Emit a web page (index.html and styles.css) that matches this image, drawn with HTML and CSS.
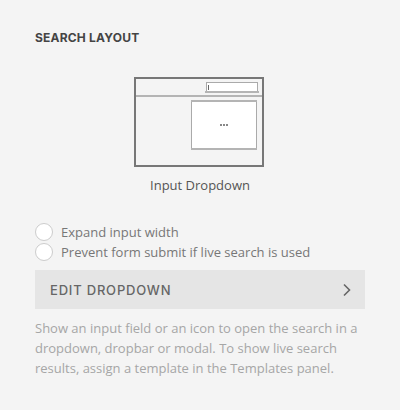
FILE: index.html
```html
<!DOCTYPE html>
<html>
  <head>
    <link rel="stylesheet" href="styles.css">
  </head>
  <body>
    <div class="panel">
      <h3 class="panel-title">Search Layout</h3>

      <div class="layout-choice">
        <svg class="layout-thumb" width="132" height="92" viewBox="0 0 132 92">
          <!-- page frame -->
          <rect x="1" y="1" width="128" height="88" fill="none" stroke="#777" stroke-width="2"/>
          <!-- header divider -->
          <rect x="2" y="18" width="126" height="2" fill="#b4b4b4"/>
          <!-- search input -->
          <rect x="72.5" y="5.5" width="51" height="10" fill="#fff" stroke="#aaa" stroke-width="1"/>
          <rect x="71" y="14" width="54" height="2" fill="#b4b4b4"/>
          <rect x="74" y="8" width="1" height="5" fill="#666"/>
          <!-- dropdown -->
          <rect x="57.5" y="23.5" width="65" height="48" fill="#fff" stroke="#aaa" stroke-width="1"/>
          <rect x="57" y="71" width="66" height="2" fill="#b4b4b4"/>
          <rect x="57" y="23" width="66" height="2" fill="#b4b4b4"/>
          <rect x="86" y="47" width="2" height="2" fill="#888"/>
          <rect x="89" y="47" width="2" height="2" fill="#888"/>
          <rect x="92" y="47" width="2" height="2" fill="#888"/>
        </svg>
        <div class="layout-name">Input Dropdown</div>
      </div>

      <div class="options">
        <label class="option"><span class="radio"></span>Expand input width</label>
        <label class="option"><span class="radio"></span>Prevent form submit if live search is used</label>
      </div>

      <button class="edit-button">
        <span>Edit Dropdown</span>
        <svg width="10" height="14" viewBox="0 0 10 14"><polyline points="2,1.5 7.5,7 2,12.5" fill="none" stroke="#666" stroke-width="1.6"/></svg>
      </button>

      <p class="help">Show an input field or an icon to open the search in a dropdown, dropbar or modal. To show live search results, assign a template in the Templates panel.</p>
    </div>
  </body>
</html>
```

FILE: styles.css
```css
html, body {
    margin: 0;
    background: #f4f4f4;
}

.panel {
    padding: 30px 35px 0 35px;
    font-family: "Open Sans", sans-serif;
    font-size: 13px;
}

.panel-title {
    margin: 0;
    font-family: "Inter", sans-serif;
    font-size: 12px;
    line-height: 16px;
    font-weight: 700;
    letter-spacing: 0.2px;
    text-transform: uppercase;
    color: #444;
}

.layout-choice {
    display: flex;
    flex-direction: column;
    align-items: center;
    margin-top: 31px;
}

.layout-thumb {
    display: block;
}

.layout-name {
    margin-top: 6px;
    line-height: 20px;
    color: #555;
}

.options {
    display: flex;
    flex-direction: column;
    margin-top: 27px;
}

.option {
    display: flex;
    align-items: center;
    gap: 8px;
    height: 20px;
    color: #777;
}

.radio {
    width: 18px;
    height: 18px;
    box-sizing: border-box;
    border: 1px solid #ccc;
    border-radius: 50%;
    background: #fff;
}

.edit-button {
    display: flex;
    align-items: center;
    justify-content: space-between;
    width: 100%;
    height: 39px;
    margin-top: 8px;
    padding: 0 13px 0 15px;
    border: none;
    background: #e5e5e5;
    font-family: "Inter", sans-serif;
    font-size: 13px;
    font-weight: 500;
    letter-spacing: 0.8px;
    text-transform: uppercase;
    color: #666;
}

.help {
    margin: 9px 0 0 0;
    line-height: 20px;
    color: #a6a6a6;
}
```
